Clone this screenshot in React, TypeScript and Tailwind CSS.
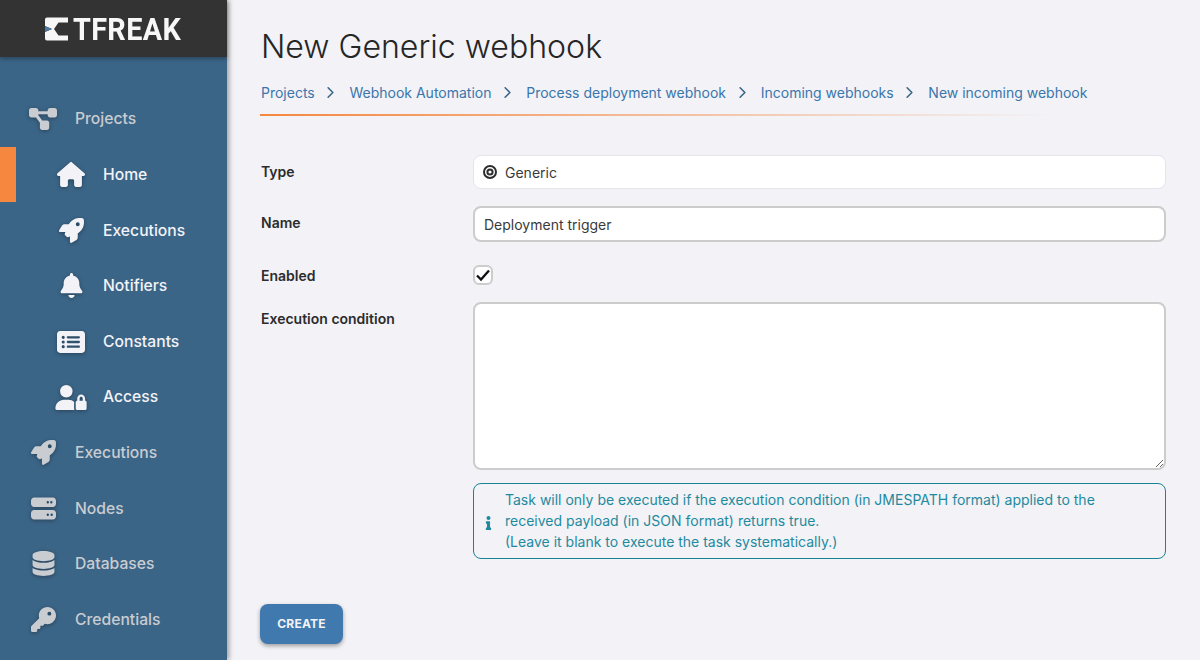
import { FaInfo } from "react-icons/fa"
import { FaBell, FaDatabase, FaDiagramProject, FaHouse, FaKey, FaRectangleList, FaRocket, FaServer, FaUserLock } from "react-icons/fa6"
import { FiChevronRight } from "react-icons/fi"
import type { IconType } from "react-icons"

type NavItem = {
  label: string
  icon: IconType
  sub?: boolean
  active?: boolean
  size: string
}

const navItems: NavItem[] = [
  { label: "Projects", icon: FaDiagramProject, size: "h-[28px] w-[28px]" },
  { label: "Home", icon: FaHouse, sub: true, active: true, size: "h-[25px] w-[28px]" },
  { label: "Executions", icon: FaRocket, sub: true, size: "h-[25px] w-[25px]" },
  { label: "Notifiers", icon: FaBell, sub: true, size: "h-[25px] w-[25px]" },
  { label: "Constants", icon: FaRectangleList, sub: true, size: "h-[28px] w-[28px]" },
  { label: "Access", icon: FaUserLock, sub: true, size: "h-[25px] w-[32px]" },
  { label: "Executions", icon: FaRocket, size: "h-[25px] w-[25px]" },
  { label: "Nodes", icon: FaServer, size: "h-[25px] w-[25px]" },
  { label: "Databases", icon: FaDatabase, size: "h-[25px] w-[25px]" },
  { label: "Credentials", icon: FaKey, size: "h-[25px] w-[25px]" },
]

const crumbs = ["Projects", "Webhook Automation", "Process deployment webhook", "Incoming webhooks", "New incoming webhook"]

function Logo() {
  return (
    <div className="flex items-center pl-[44px]">
      <svg width="25" height="24" viewBox="0 0 25 24" className="shrink-0">
        <path d="M3 0.500H24V5.500H14.500L10 12L14.500 18.500H24V23.500H3C1.500 23.500 1 22.500 1 21V15L8 12L1 9V3C1 1.500 1.500 0.500 3 0.500Z" fill="#f7f7f7" />
        <path d="M1 9.200L8 12L1 14.800Z" fill="#4a7ba6" />
      </svg>
      <span className="ml-[4px] w-[120px] origin-left scale-x-[0.9] font-['Roboto',sans-serif] text-[32px] font-bold leading-none tracking-[0.4px] text-[#f7f7f7]">TFREAK</span>
    </div>
  )
}

function Sidebar() {
  return (
    <aside className="flex h-[660px] w-[227px] shrink-0 flex-col bg-[#3b6587] shadow-[2px_0_5px_rgba(0,0,0,0.35)]">
      <div className="flex h-[57px] items-center bg-[#333333] shadow-[0_2px_4px_rgba(0,0,0,0.3)]">
        <Logo />
      </div>
      <nav className="pt-[34.4px]">
        {navItems.map((item, i) => {
          const Icon = item.icon
          return (
            <div key={i} className={`relative flex h-[55.6px] items-center ${item.sub ? "pl-[55px]" : "pl-[27px]"}`}>
              {item.active && <div className="absolute left-0 top-0 h-[55px] w-[16px] bg-[#f5873f]" />}
              <div className="flex w-[48px] shrink-0 items-center">
                <div className="flex w-[32px] justify-center">
                  <Icon className={`${item.size} drop-shadow-[0_1px_2px_rgba(0,0,0,0.35)] ${item.sub ? "text-[#f2f2f7]" : "text-[#c9ccd1]"}`} />
                </div>
              </div>
              <span className={`text-[15.7px] font-medium ${item.sub ? "text-[#f2f2f7]" : "text-[#c9ccd1]"}`}>{item.label}</span>
            </div>
          )
        })}
      </nav>
    </aside>
  )
}

function FormRow({ label, height, children }: { label: string; height: string; children: React.ReactNode }) {
  return (
    <div className={`flex ${height}`}>
      <div className="-mt-[2px] w-[212px] shrink-0 text-[14px] font-semibold text-[#2c2c2c]">{label}</div>
      <div className="flex-1">{children}</div>
    </div>
  )
}

export default function App() {
  return (
    <div className="flex h-[660px] w-[1200px] overflow-hidden bg-[#f2f2f7] font-['Inter',sans-serif]">
      <Sidebar />
      <main className="flex-1 pl-[34px] pr-[34px]">
        <h1 className="pt-[27px] text-[32.1px] font-[350] leading-[39px] text-[#262626]">New Generic webhook</h1>
        <div className="mt-[17px] flex h-[18px] items-center text-[14px] text-[#3a76ab]">
          {crumbs.map((c, i) => (
            <div key={c} className="flex items-center">
              <span>{c}</span>
              {i < crumbs.length - 1 && <FiChevronRight className="ml-[6.5px] mr-[9.2px] h-[19px] w-[19px] text-[#3b6587]" />}
            </div>
          ))}
        </div>
        <div className="-ml-[1px] mt-[13px] h-[2px] w-[790px] bg-gradient-to-r from-[#f5873f] to-transparent" />

        <div className="mt-[39px]">
          <FormRow label="Type" height="h-[51px] pt-[8px]">
            <div className="-mt-[8px] flex h-[34px] items-center rounded-[8px] border border-[#e4e4ef] bg-white pl-[9px] text-[14px] text-[#3a3a3a]">
              <svg viewBox="0 0 14 14" className="mr-[8px] h-[14px] w-[14px] shrink-0">
                <circle cx="7" cy="7" r="6" fill="none" stroke="#2c2c2c" strokeWidth="2" />
                <circle cx="7" cy="7" r="2.600" fill="none" stroke="#2c2c2c" strokeWidth="2" />
              </svg>
              Generic
            </div>
          </FormRow>
          <FormRow label="Name" height="h-[59px] pt-[8px]">
            <div className="-mt-[8px] flex h-[36px] items-center rounded-[8px] border-2 border-[#cccccc] bg-white pl-[9px] text-[14px] text-[#3a3a3a]">
              Deployment trigger
            </div>
          </FormRow>
          <FormRow label="Enabled" height="h-[37px] pt-[2px]">
            <div className="-mt-[2px] flex h-[20px] w-[20px] items-center justify-center rounded-[6px] border-2 border-[#cccccc] bg-white">
              <svg viewBox="0 0 16 16" className="h-[16px] w-[16px]">
                <path d="M2 8.500L6 12.500L14 3.500" fill="none" stroke="#111" strokeWidth="2.300" />
              </svg>
            </div>
          </FormRow>
          <FormRow label="Execution condition" height="h-[181px] pt-[8px]">
            <div className="-mt-[8px]">
              <textarea readOnly className="block h-[168px] w-full resize-y rounded-[8px] border-2 border-[#cccccc] bg-white outline-none" />
            </div>
          </FormRow>
          <div className="ml-[212px] flex h-[76px] items-center rounded-[8px] border border-[#1a8296] text-[14px] leading-[21px] text-[#1f8a9e]">
            <FaInfo className="ml-[8px] mr-[10px] mt-[3px] h-[14px] w-[13px] shrink-0 text-[#1f8a9e]" />
            <div className="-mt-[2px]">
              Task will only be executed if the execution condition (in JMESPATH format) applied to the
              <br />
              received payload (in JSON format) returns true.
              <br />
              (Leave it blank to execute the task systematically.)
            </div>
          </div>
        </div>

        <button className="-ml-[1px] mt-[45px] flex h-[40px] w-[83px] items-center justify-center rounded-[8px] bg-[#3f79ad] text-[12px] font-bold tracking-[0.2px] text-[#f2f2f7] shadow-[0_2px_4px_rgba(0,0,0,0.35)]">
          CREATE
        </button>
      </main>
    </div>
  )
}
